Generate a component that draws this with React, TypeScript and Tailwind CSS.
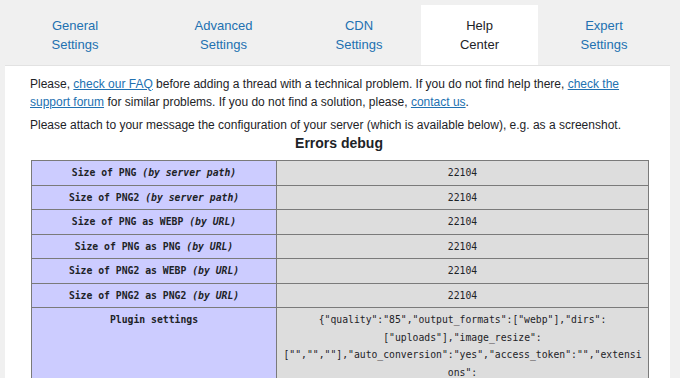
import React from 'react';

const tabs = [
  { label: ['General', 'Settings'], width: 'w-[150px]', active: false },
  { label: ['Advanced', 'Settings'], width: 'w-[147px]', active: false },
  { label: ['CDN', 'Settings'], width: 'w-[124px]', active: false },
  { label: ['Help', 'Center'], width: 'w-[117px]', active: true },
  { label: ['Expert', 'Settings'], width: 'w-[132px]', active: false },
];

const rows: { name: string; note: string; value: string }[] = [
  { name: 'Size of PNG', note: '(by server path)', value: '22104' },
  { name: 'Size of PNG2', note: '(by server path)', value: '22104' },
  { name: 'Size of PNG as WEBP', note: '(by URL)', value: '22104' },
  { name: 'Size of PNG as PNG', note: '(by URL)', value: '22104' },
  { name: 'Size of PNG2 as WEBP', note: '(by URL)', value: '22104' },
  { name: 'Size of PNG2 as PNG2', note: '(by URL)', value: '22104' },
];

const pluginSettings =
  '{"quality":"85","output_formats":["webp"],"dirs":["uploads"],"image_resize":["","",""],"auto_conversion":"yes","access_token":"","extensions":["jpg","jpeg","png","gif","jpg","jpeg","png","gif"],"method":"gd","quality_check":"auto"}';

export default function App() {
  return (
    <div className="min-h-[378px] bg-[#f0f0f0] pt-[5px] text-[#1d2327] font-['Liberation_Sans',Arial,sans-serif]">
      <div className="flex">
        {tabs.map(tab => (
          <div
            key={tab.label[0]}
            className={`${tab.width} py-[11px] text-center text-[13px] leading-[19px] ${
              tab.active ? 'bg-white text-[#1d2327]' : 'text-[#2271b1]'
            }`}
          >
            <div>{tab.label[0]}</div>
            <div>{tab.label[1]}</div>
          </div>
        ))}
      </div>

      <div className="mx-[5px] w-[665px] h-[313px] overflow-hidden border-t border-[#e2e2e2] bg-white pl-[25px] pr-[22px] pt-[9px]">
        <p className="text-[12px] leading-[18px]">
          Please, <a className="text-[#2271b1] underline">check our FAQ</a> before adding a thread with a technical
          problem. If you do not find help there, <a className="text-[#2271b1] underline">check the support forum</a>{' '}
          for similar problems. If you do not find a solution, please,{' '}
          <a className="text-[#2271b1] underline">contact us</a>.
        </p>
        <p className="mt-[5px] text-[12px] leading-[18px]">
          Please attach to your message the configuration of your server (which is available below), e.g. as a
          screenshot.
        </p>
        <h3 className="text-center text-[14px] font-bold leading-[18px]">Errors debug</h3>

        <table className="mt-[8px] ml-px w-[617px] table-fixed border-collapse font-['DejaVu_Sans_Mono',monospace] text-[9.75px] leading-[17.5px]">
          <colgroup>
            <col className="w-[245px]" />
            <col className="w-[372px]" />
          </colgroup>
          <tbody>
            {rows.map(row => (
              <tr key={row.name}>
                <th className="border border-[#7a7a7a] bg-[#ccccff] px-[6px] py-[3px] text-center font-bold">
                  {row.name} <i>{row.note}</i>
                </th>
                <td className="border border-[#7a7a7a] bg-[#dddddd] px-[6px] py-[3px] text-center">{row.value}</td>
              </tr>
            ))}
            <tr>
              <th className="border border-[#7a7a7a] bg-[#ccccff] px-[6px] py-[3px] text-center align-top font-bold">
                Plugin settings
              </th>
              <td className="border border-[#7a7a7a] bg-[#dddddd] px-[6px] py-[3px] text-center break-words">
                {pluginSettings}
              </td>
            </tr>
          </tbody>
        </table>
      </div>
    </div>
  );
}
